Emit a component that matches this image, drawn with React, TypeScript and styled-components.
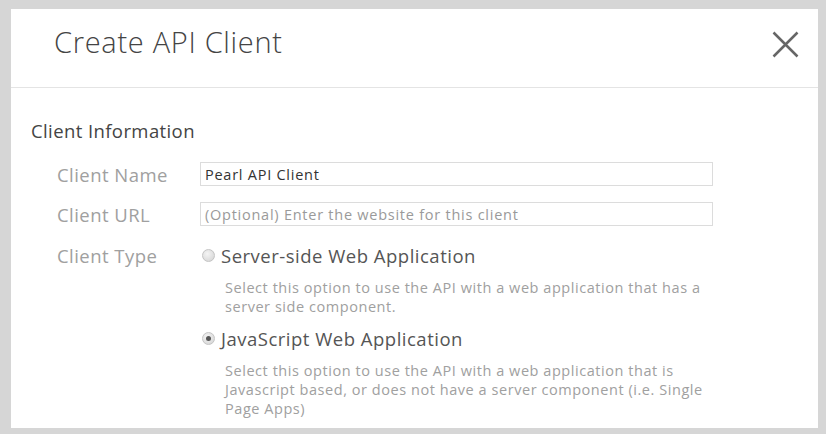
import React from "react";
import styled, { createGlobalStyle } from "styled-components";

const GlobalStyle = createGlobalStyle`
  html, body {
    margin: 0;
    padding: 0;
    background: #d8d8d8;
  }
  body {
    font-family: "Open Sans", "Noto Sans", sans-serif;
  }
`;

const Frame = styled.div`
  width: 826px;
  height: 434px;
  box-sizing: border-box;
  padding: 9px 8px 6px 11px;
  background: #d6d6d6;
`;

const Panel = styled.div`
  height: 100%;
  background: #fff;
  display: flex;
  flex-direction: column;
  overflow: hidden;
`;

const Header = styled.div`
  flex-shrink: 0;
  height: 79px;
  box-sizing: border-box;
  border-bottom: 1px solid #e4e4e4;
  display: flex;
  align-items: flex-start;
  justify-content: space-between;
  padding: 19px 19px 0 43px;
`;

const Title = styled.h1`
  margin: 0;
  font-size: 29px;
  line-height: 28px;
  font-weight: 300;
  letter-spacing: 0.7px;
  color: #444;
`;

const CloseButton = styled.button`
  border: 0;
  background: none;
  padding: 0;
  margin-top: 3px;
  width: 27px;
  height: 27px;
  cursor: pointer;
  svg {
    display: block;
  }
`;

const Body = styled.div`
  flex-shrink: 0;
  padding: 34px 20px 0 20px;
`;

const SectionTitle = styled.h2`
  margin: 0 0 22px;
  font-size: 18.5px;
  line-height: 18px;
  font-weight: 400;
  letter-spacing: 0.4px;
  color: #444;
`;

const Row = styled.div<{ $gap?: number }>`
  display: flex;
  align-items: flex-start;
  padding-left: 26px;
  margin-bottom: ${(p) => p.$gap ?? 16}px;
`;

const Label = styled.label`
  width: 143px;
  flex-shrink: 0;
  padding-top: 2px;
  font-size: 18.5px;
  line-height: 22px;
  letter-spacing: 0.45px;
  color: #a0a0a0;
`;

const TextInput = styled.input`
  width: 513px;
  height: 24px;
  box-sizing: border-box;
  border: 1px solid #dcdcdc;
  padding: 0 4px;
  font-family: "Open Sans", "Noto Sans", sans-serif;
  font-size: 14.5px;
  letter-spacing: 0.75px;
  color: #333;
  outline: none;
  &::placeholder {
    color: #9a9a9a;
  }
`;

const Options = styled.div`
  display: flex;
  flex-direction: column;
`;

const OptionTitle = styled.div`
  display: flex;
  align-items: center;
  height: 24px;
  font-size: 18.5px;
  letter-spacing: 0.5px;
  color: #555;
`;

const Radio = styled.span<{ $checked?: boolean }>`
  width: 13px;
  height: 13px;
  box-sizing: border-box;
  border-radius: 50%;
  border: 1px solid #c4c4c4;
  background: radial-gradient(circle at 40% 35%, #f4f4f4, #d2d2d2);
  margin: 0 6px 0 2px;
  display: flex;
  align-items: center;
  justify-content: center;
  &::after {
    content: "";
    display: ${(p) => (p.$checked ? "block" : "none")};
    width: 5px;
    height: 5px;
    border-radius: 50%;
    background: #555;
  }
`;

const OptionText = styled.p<{ $after?: number }>`
  margin: 11px 0 ${(p) => p.$after ?? 0}px 25px;
  width: 482px;
  font-size: 14.5px;
  line-height: 19px;
  letter-spacing: 0.55px;
  color: #a0a0a0;
`;

export default function App() {
  return (
    <>
      <GlobalStyle />
      <Frame>
        <Panel>
          <Header>
            <Title>Create API Client</Title>
            <CloseButton aria-label="Close">
              <svg width="27" height="27" viewBox="0 0 27 27">
                <path d="M1.5 1.5 L25.5 25.5 M25.5 1.5 L1.5 25.5" stroke="#666" strokeWidth="2.5" fill="none" />
              </svg>
            </CloseButton>
          </Header>
          <Body>
            <SectionTitle>Client Information</SectionTitle>
            <Row>
              <Label>Client Name</Label>
              <TextInput defaultValue="Pearl API Client" />
            </Row>
            <Row $gap={17}>
              <Label>Client URL</Label>
              <TextInput placeholder="(Optional) Enter the website for this client" />
            </Row>
            <Row>
              <Label>Client Type</Label>
              <Options>
                <OptionTitle>
                  <Radio />
                  Server-side Web Application
                </OptionTitle>
                <OptionText $after={10}>
                  Select this option to use the API with a web application that has a server side component.
                </OptionText>
                <OptionTitle>
                  <Radio $checked />
                  JavaScript Web Application
                </OptionTitle>
                <OptionText>
                  Select this option to use the API with a web application that is Javascript based, or does not have a server component (i.e. Single Page Apps)
                </OptionText>
              </Options>
            </Row>
          </Body>
        </Panel>
      </Frame>
    </>
  );
}
